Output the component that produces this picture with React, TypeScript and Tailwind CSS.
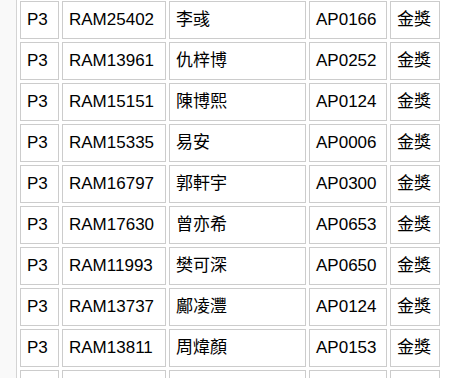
import React from "react";

const rows: string[][] = [
  ["P3", "RAM25402", "李彧", "AP0166", "金獎"],
  ["P3", "RAM13961", "仇梓博", "AP0252", "金獎"],
  ["P3", "RAM15151", "陳博熙", "AP0124", "金獎"],
  ["P3", "RAM15335", "易安", "AP0006", "金獎"],
  ["P3", "RAM16797", "郭軒宇", "AP0300", "金獎"],
  ["P3", "RAM17630", "曾亦希", "AP0653", "金獎"],
  ["P3", "RAM11993", "樊可深", "AP0650", "金獎"],
  ["P3", "RAM13737", "鄺凌灃", "AP0124", "金獎"],
  ["P3", "RAM13811", "周煒顏", "AP0153", "金獎"],
  ["", "", "", "", ""],
];

export default function App() {
  return (
    <div
      className="flex h-[378px] w-[452px] overflow-hidden bg-white text-black"
      style={{ fontFamily: '"Liberation Sans", Arial, "Noto Sans CJK TC", sans-serif' }}
    >
      <div className="w-[16px] shrink-0 bg-[#f9f9f9]" />
      <div className="flex-1 border-l border-[#d4d4d4] pl-[3px] pt-[1px]">
        <div className="grid grid-cols-[39px_104px_137px_78px_50px] auto-rows-[38px] gap-[3px]">
          {rows.map((r, i) =>
            r.map((c, j) => (
              <div
                key={`${i}-${j}`}
                className="flex items-center border border-[#cccccc] px-[6px] text-[17px] leading-[20px] whitespace-nowrap overflow-hidden"
              >
                {c}
              </div>
            ))
          )}
        </div>
      </div>
    </div>
  );
}
